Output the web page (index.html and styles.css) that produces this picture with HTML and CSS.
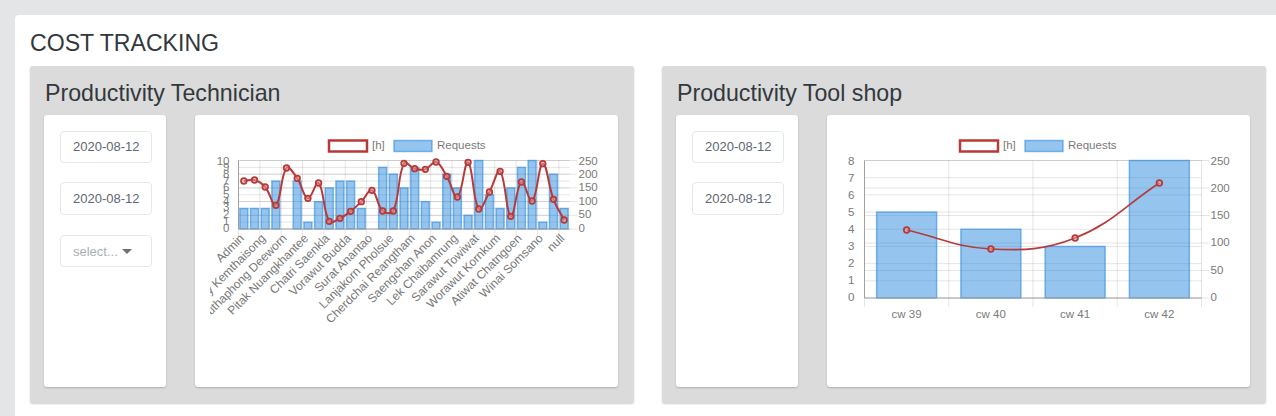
FILE: index.html
```html
<!DOCTYPE html>
<html lang="en">
<head>
<meta charset="utf-8">
<title>Cost Tracking</title>
<link rel="stylesheet" href="styles.css">
</head>
<body>
<main class="page-card">
  <h1 class="page-title">COST TRACKING</h1>
  <div class="panels">
    <section class="panel">
      <h2 class="panel-title">Productivity Technician</h2>
      <div class="panel-body">
        <div class="filters">
          <div class="field">2020-08-12</div>
          <div class="field">2020-08-12</div>
          <div class="field field-select"><span>select...</span><i class="caret"></i></div>
        </div>
        <div class="chart-card"><svg class="chart" id="chart-tech" width="393" height="242"></svg></div>
      </div>
    </section>
    <section class="panel">
      <h2 class="panel-title">Productivity Tool shop</h2>
      <div class="panel-body">
        <div class="filters">
          <div class="field">2020-08-12</div>
          <div class="field">2020-08-12</div>
        </div>
        <div class="chart-card"><svg class="chart" id="chart-shop" width="393" height="242"></svg></div>
      </div>
    </section>
  </div>
</main>
<script src="charts.js"></script>
</body>
</html>
```
FILE: styles.css
```css
* { box-sizing: border-box; }
html, body { margin: 0; height: 416px; overflow: hidden; }
body {
  background: #e4e5e6;
  padding: 15px 0 0 15px;
  font-family: "Liberation Sans", Arial, sans-serif;
  color: #33383d;
}
.page-card {
  background: #fff;
  border-radius: 4px 0 0 0;
  padding: 15px 10px 20px 15px;
  width: 1261px;
  height: 420px;
}
.page-title {
  margin: 0;
  font-size: 23.1px;
  font-weight: 400;
  line-height: 26px;
  height: 35.5px;
}
.panels { display: flex; gap: 28px; }
.panel {
  width: 604px;
  background: #dbdbdb;
  border-radius: 3px;
  box-shadow: 0 1px 2px rgba(0, 0, 0, .2);
  padding: 0 16px 15.5px 14px;
}
.panel-title {
  margin: 0 0 0 1px;
  font-size: 23.2px;
  font-weight: 400;
  line-height: 26px;
  padding: 14.5px 0 9px;
}
.panel-body { display: flex; gap: 29px; height: 272px; }
.filters, .chart-card {
  background: #fff;
  border-radius: 3px;
  box-shadow: 0 1px 2px rgba(0, 0, 0, .2);
}
.filters {
  width: 123px;
  padding: 16px 14px 0 16px;
  display: flex;
  flex-direction: column;
  gap: 19px;
}
.field {
  height: 32px;
  border: 1px solid #e4e7ea;
  border-radius: 4px;
  font-size: 13px;
  line-height: 30px;
  color: #5c6873;
  padding-left: 12px;
}
.field + .field { height: 33px; line-height: 31px; }
.field + .field.field-select { height: 32px; margin-top: 1px; }
.field-select {
  display: flex;
  align-items: center;
  gap: 4px;
  color: #a9afb6;
}
.caret {
  width: 0;
  height: 0;
  border-left: 5px solid transparent;
  border-right: 5px solid transparent;
  border-top: 5px solid #707070;
}
.chart-card { width: 423px; padding: 15px; }
.chart { display: block; overflow: hidden; }
.grid { stroke: rgba(0, 0, 0, .1); stroke-width: 1; fill: none; }
.axis { stroke: #a0a0a0; stroke-width: 1; fill: none; }
.bar { fill: rgba(33, 133, 221, .48); stroke: rgba(33, 133, 221, .55); stroke-width: 1.5; }
.curve { fill: none; stroke: #b73a3a; stroke-width: 2; }
.curve-thin { stroke-width: 1.7; }
.dot { fill: rgba(225, 160, 160, .55); stroke: #b73a3a; stroke-width: 1.8; }
.legend-line { fill: #fff; stroke: #b73a3a; stroke-width: 2.5; }
.tick { font-size: 11.5px; fill: #7a7a7a; font-family: "Liberation Sans", Arial, sans-serif; }
.tick-slant { font-size: 12px; fill: #777; font-family: "Liberation Sans", Arial, sans-serif; }
```
FILE: charts.js
```js
(function () {
  var NS = 'http://www.w3.org/2000/svg';
  var T = 0.4;

  function add(svg, tag, attrs, text) {
    var el = document.createElementNS(NS, tag);
    for (var k in attrs) el.setAttribute(k, attrs[k]);
    if (text !== undefined) el.textContent = text;
    svg.appendChild(el);
    return el;
  }

  function spline(pts) {
    var d = 'M' + pts[0][0] + ' ' + pts[0][1];
    var ctrl = pts.map(function (p, i) {
      var a = pts[Math.max(i - 1, 0)], b = pts[Math.min(i + 1, pts.length - 1)];
      var d1 = Math.hypot(p[0] - a[0], p[1] - a[1]), d2 = Math.hypot(b[0] - p[0], b[1] - p[1]);
      var sum = d1 + d2 || 1, fa = T * d1 / sum, fb = T * d2 / sum;
      return {
        px: p[0] - fa * (b[0] - a[0]), py: p[1] - fa * (b[1] - a[1]),
        nx: p[0] + fb * (b[0] - a[0]), ny: p[1] + fb * (b[1] - a[1])
      };
    });
    for (var i = 1; i < pts.length; i++) {
      d += 'C' + ctrl[i - 1].nx + ' ' + ctrl[i - 1].ny + ' ' + ctrl[i].px + ' ' + ctrl[i].py + ' ' + pts[i][0] + ' ' + pts[i][1];
    }
    return d;
  }

  function draw(o) {
    var svg = document.getElementById(o.id);
    var ox = o.originX, oy = 130;
    var L = o.left - ox, R = o.right - ox, Y0 = o.top - oy, Y1 = o.bottom - oy;
    var H = Y1 - Y0, n = o.bars.length, step = (R - L) / n;
    var i, y, x, ly;

    // legend
    add(svg, 'rect', { x: o.legendX - ox, y: 10.5, width: 38, height: 11, 'class': 'legend-line' });
    add(svg, 'text', { x: o.legendX + 43 - ox, y: 18.5, 'class': 'tick' }, '[h]');
    add(svg, 'rect', { x: o.legendX + 65 - ox, y: 10.5, width: 38, height: 11, 'class': 'bar' });
    add(svg, 'text', { x: o.legendX + 108 - ox, y: 18.5, 'class': 'tick' }, 'Requests');

    // horizontal grid: left scale
    for (i = 0; i <= o.leftMax; i++) {
      y = Y1 - H * i / o.leftMax;
      ly = Y1 - o.labelLift - (H - o.labelLift) * i / o.leftMax;
      if (i > 0) add(svg, 'line', { x1: L, x2: R, y1: y, y2: y, 'class': 'grid' });
      add(svg, 'text', { x: L - o.leftGap, y: ly + 4, 'text-anchor': 'end', 'class': 'tick' }, String(i));
    }
    // horizontal grid: right scale
    for (i = 0; i <= 5; i++) {
      y = Y1 - H * i / 5;
      ly = Y1 - o.labelLift - (H - o.labelLift) * i / 5;
      add(svg, 'line', { x1: L, x2: R + 8, y1: y, y2: y, 'class': 'grid' });
      add(svg, 'text', { x: R + 9, y: ly + 4, 'class': 'tick' }, String(i * 50));
    }
    // vertical grid
    for (i = 0; i <= n; i += o.gridEvery) {
      x = L + step * i;
      add(svg, 'line', { x1: x, x2: x, y1: Y0, y2: Y1 + 9, 'class': 'grid' });
    }
    // bars
    var barW = o.barWidth;
    o.bars.forEach(function (v, idx) {
      if (!v) return;
      var h = H * v / o.leftMax, cx = L + step * (idx + 0.5);
      add(svg, 'rect', { x: cx - barW / 2, y: Y1 - h, width: barW, height: h, 'class': 'bar' });
    });
    // axes
    add(svg, 'line', { x1: L, x2: L, y1: Y0, y2: Y1, 'class': 'axis' });
    add(svg, 'line', { x1: L, x2: R, y1: Y1, y2: Y1, 'class': 'axis' });

    // line series
    var pts = o.line.map(function (py, idx) {
      return [L + step * (idx + 0.5), py - oy];
    });
    add(svg, 'path', { d: spline(pts), 'class': o.rotate ? 'curve' : 'curve curve-thin' });
    pts.forEach(function (p) {
      add(svg, 'circle', { cx: p[0], cy: p[1], r: 2.8, 'class': 'dot' });
    });

    // x labels
    o.labels.forEach(function (label, idx) {
      var cx = L + step * (idx * o.labelEvery + 0.5);
      if (o.rotate) {
        var ax = cx + 1, ay = Y1 + 10;
        add(svg, 'text', { x: ax, y: ay, 'text-anchor': 'end', transform: 'rotate(-45 ' + ax + ' ' + ay + ')', 'class': 'tick-slant' }, label);
      } else {
        add(svg, 'text', { x: cx, y: Y1 + 20, 'text-anchor': 'middle', 'class': 'tick' }, label);
      }
    });
  }

  var zoomY = function (z) { return 130 + z / 3; };

  draw({
    id: 'chart-tech', originX: 210,
    left: 238.5, right: 569.5, top: 160.5, bottom: 229,
    legendX: 329, leftMax: 10, leftGap: 9, labelLift: 1.5, gridEvery: 2, barWidth: 8, rotate: true, labelEvery: 2,
    bars: [3, 3, 3, 7, 0, 7, 1, 4, 6, 7, 7, 3, 0, 9, 8, 6, 9, 4, 1, 8, 6, 2, 10, 5, 3, 6, 9, 10, 1, 8, 3],
    line: [153, 150, 171, 226, 114, 145, 205, 159, 274, 265, 244, 215, 181, 243, 243, 100, 116, 118, 96, 139, 201, 97, 237, 186, 124, 259, 156, 213, 101, 208, 270].map(zoomY),
    labels: ['Admin', 'Anuchay Kemthaisong', 'Suthaphong Deeworn', 'Pitak Nuangkhantee', 'Chatri Saenkla', 'Vorawut Budda', 'Surat Anantao', 'Lanjakorn Pholsue', 'Cherdchai Reangtham', 'Saengchan Anon', 'Lek Chaibamrung', 'Sarawut Towiwat', 'Worawut Kornkum', 'Atiwat Chatngoen', 'Winai Somsano', 'null']
  });

  draw({
    id: 'chart-shop', originX: 842,
    left: 864.5, right: 1201.5, top: 160.5, bottom: 298,
    legendX: 960, leftMax: 8, leftGap: 10, labelLift: 1, gridEvery: 1, barWidth: 60, rotate: false, labelEvery: 1,
    bars: [5, 4, 3, 8],
    line: [230, 249, 238, 183],
    labels: ['cw 39', 'cw 40', 'cw 41', 'cw 42']
  });
})();
```
